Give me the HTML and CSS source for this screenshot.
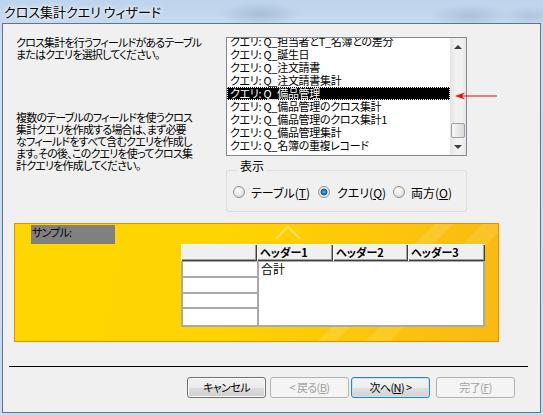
FILE: index.html
```html
<!DOCTYPE html>
<html lang="ja">
<head>
<meta charset="utf-8">
<title>クロス集計クエリ ウィザード</title>
<link rel="stylesheet" href="styles.css">
</head>
<body>
<div class="titlebar"><span class="title">クロス集計クエリ ウィザード</span></div>
<div class="client">
  <div class="top">
    <div class="desc">
      <p class="p1">クロス集計を行うフィールドがあるテーブル<br>またはクエリを選択してください。</p>
      <p class="p2">複数のテーブルのフィールドを使うクロス<br>集計クエリを作成する場合は、まず必要<br>なフィールドをすべて含むクエリを作成し<br>ます。その後、このクエリを使ってクロス集<br>計クエリを作成してください。</p>
    </div>
    <div class="right">
      <div class="listbox">
        <div class="items-view">
          <ul class="items">
            <li>クエリ: Q_担当者とT_名簿との差分</li>
            <li>クエリ: Q_誕生日</li>
            <li>クエリ: Q_注文請書</li>
            <li>クエリ: Q_注文請書集計</li>
            <li class="selected">クエリ: Q_備品管理</li>
            <li>クエリ: Q_備品管理のクロス集計</li>
            <li>クエリ: Q_備品管理のクロス集計1</li>
            <li>クエリ: Q_備品管理集計</li>
            <li>クエリ: Q_名簿の重複レコード</li>
          </ul>
        </div>
        <div class="scrollbar">
          <div class="sb-btn"><span class="tri-up"></span></div>
          <div class="sb-track"><div class="thumb"></div></div>
          <div class="sb-btn"><span class="tri-down"></span></div>
        </div>
        <svg class="redarrow" width="44" height="10" viewBox="0 0 44 10">
          <line x1="6" y1="5" x2="42" y2="5" stroke="#e01010" stroke-width="1.2"/>
          <polygon points="0,5 10,1.5 7,5 10,8.5" fill="#e01010"/>
        </svg>
      </div>
      <fieldset class="group">
        <legend>表示</legend>
        <div class="radios">
          <label class="opt opt1"><span class="radio"></span><span>テーブル(<u>T</u>)</span></label>
          <label class="opt opt2"><span class="radio on"></span><span>クエリ(<u>Q</u>)</span></label>
          <label class="opt"><span class="radio"></span><span>両方(<u>O</u>)</span></label>
        </div>
      </fieldset>
    </div>
  </div>

  <div class="sample">
    <div class="sample-label">サンプル:</div>
    <div class="xtab">
      <div class="xhead">
        <div class="hcell"></div>
        <div class="hcell">ヘッダー1</div>
        <div class="hcell">ヘッダー2</div>
        <div class="hcell">ヘッダー3</div>
      </div>
      <div class="xbody">
        <div class="rowcol">
          <div class="rcell"></div>
          <div class="rcell"></div>
          <div class="rcell"></div>
          <div class="rcell"></div>
        </div>
        <div class="valcell">合計</div>
      </div>
    </div>
  </div>

  <div class="sep"></div>

  <div class="buttons">
    <button class="btn">キャンセル</button>
    <button class="btn disabled">&lt; 戻る(<u>B</u>)</button>
    <button class="btn default">次へ(<u>N</u>) &gt;</button>
    <button class="btn disabled finish">完了(<u>F</u>)</button>
  </div>
</div>
</body>
</html>
```
FILE: styles.css
```css
html, body {
  margin: 0;
  padding: 0;
}
body {
  width: 543px;
  height: 415px;
  overflow: hidden;
  background:
    radial-gradient(ellipse 40px 12px at 260px 14px, rgba(120,140,170,.35), transparent),
    radial-gradient(ellipse 40px 12px at 470px 16px, rgba(120,140,170,.3), transparent),
    radial-gradient(ellipse 30px 10px at 530px 16px, rgba(120,140,170,.25), transparent),
    linear-gradient(#bed4ec, #cbdef2 40px, #c9dcf1);
  font-family: "Noto Sans CJK JP", "Noto Sans", sans-serif;
  font-size: 12px;
  font-feature-settings: "palt";
  color: #000;
}

/* title bar */
.titlebar {
  height: 23px;
  padding-left: 4px;
  display: flex;
  align-items: center;
}
.title {
  font-size: 13px;
  line-height: 15px;
  text-shadow: 0 0 6px #fff, 0 0 3px #fff;
}

/* client area */
.client {
  margin: 0 2px;
  height: 388px;
  border: 1px solid #637286;
  background: #f0f0f0;
}

.top {
  display: flex;
  padding: 13px 0 0 13px;
}
.desc {
  width: 210px;
  font-size: 11px;
  letter-spacing: -0.8px;
}
.desc p {
  margin: 0;
  line-height: 12px;
  white-space: nowrap;
}
.desc .p1 {
  margin-top: -1px;
}
.desc .p2 {
  margin-top: 51px;
}

.right {
  width: 241px;
}

/* list box */
.listbox {
  position: relative;
  width: 241px;
  height: 119px;
  box-sizing: border-box;
  border: 1px solid #828790;
  background: #fff;
  display: flex;
}
.items-view {
  width: 223px;
  overflow: hidden;
}
.items {
  list-style: none;
  margin: -3px 0 0 0;
  padding: 0;
  font-size: 11px;
  letter-spacing: -0.3px;
}
.items li {
  height: 13px;
  line-height: 13px;
  padding-left: 3px;
  white-space: nowrap;
}
.items li.selected {
  background: #000;
  color: #fff;
  outline: 1px dotted #fff;
  outline-offset: -1px;
}

.scrollbar {
  width: 16px;
  display: flex;
  flex-direction: column;
  background: linear-gradient(90deg, #e3e3e3, #f1f1f1 35%, #f1f1f1 70%, #e6e6e6);
}
.sb-btn {
  height: 17px;
  display: flex;
  align-items: center;
  justify-content: center;
}
.tri-up {
  width: 0;
  height: 0;
  border-left: 4px solid transparent;
  border-right: 4px solid transparent;
  border-bottom: 4px solid #3c3c3c;
}
.tri-down {
  width: 0;
  height: 0;
  border-left: 4px solid transparent;
  border-right: 4px solid transparent;
  border-top: 4px solid #3c3c3c;
}
.sb-track {
  flex: 1;
  display: flex;
  flex-direction: column;
  justify-content: flex-end;
}
.thumb {
  height: 15px;
  margin: 0 1px;
  box-sizing: border-box;
  border: 1px solid #9aa1a8;
  border-radius: 2px;
  background: linear-gradient(90deg, #f6f6f6, #e8e8e8 50%, #d9d9d9);
}
.redarrow {
  position: absolute;
  left: 228px;
  top: 53px;
}

/* group box */
.group {
  margin: 3px 0 0 0;
  padding: 0 0 8px 5px;
  width: 241px;
  box-sizing: border-box;
  min-width: 0;
  border: 1px solid #d5dfe5;
  border-radius: 3px;
}
.group legend {
  margin-left: 5px;
  padding: 0 3px 8px;
  line-height: 14px;
  font-size: 12px;
}
.radios {
  display: flex;
  align-items: center;
  height: 22px;
}
.opt {
  flex: none;
  display: flex;
  align-items: center;
  gap: 6px;
  white-space: nowrap;
}
.opt1 { width: 85px; }
.opt2 { width: 75px; gap: 7px; }
.radio {
  width: 12px;
  height: 12px;
  margin-left: 1px;
  box-sizing: border-box;
  border-radius: 50%;
  border: 1px solid #8e8f8f;
  background: radial-gradient(circle at 40% 35%, #ffffff 0, #eeeeee 40%, #d0d0d0 100%);
}
.radio.on {
  background: radial-gradient(circle at 50% 50%, #7cc7f0 0, #2a84c6 1.5px, #0d4f8f 3.2px, #e9e9e9 3.7px, #f9f9f9 100%);
}

/* sample */
.sample {
  position: relative;
  margin: 11px 0 0 11px;
  width: 485px;
  height: 119px;
  box-sizing: border-box;
  border: 1px solid #f08c00;
  background:
    linear-gradient(135deg, transparent 0 70%, rgba(255,255,255,.12) 70% 73%, transparent 73% 78%, rgba(255,255,255,.1) 78% 82%, transparent 82%),
    linear-gradient(100deg, #ffd700 0%, #ffd300 45%, #fdc70a 72%, #f9b912 100%);
  overflow: hidden;
}
.sample::before {
  content: "";
  position: absolute;
  left: 264px;
  top: 5px;
  width: 16px;
  height: 16px;
  border-left: 2px solid rgba(255,255,255,.35);
  border-top: 2px solid rgba(255,255,255,.35);
  transform: rotate(45deg);
}
.sample-label {
  position: relative;
  margin: 1px 0 0 16px;
  width: 84px;
  height: 19px;
  padding-left: 1px;
  box-sizing: border-box;
  background: #808080;
  font-size: 11px;
  letter-spacing: -0.8px;
  line-height: 15px;
}
.xtab {
  position: relative;
  margin-left: 166px;
  width: 304px;
}
.xhead {
  display: grid;
  grid-template-columns: 76px 76px 75px 77px;
  height: 17px;
}
.hcell {
  background: #f0f0f0;
  box-shadow: inset 1px 1px #ffffff, inset -1px -1px #404040, inset -2px -2px #a0a0a0;
  font-size: 11px;
  font-weight: bold;
  line-height: 16px;
  padding-left: 3px;
  white-space: nowrap;
}
.xbody {
  display: grid;
  grid-template-columns: 76px 1fr;
  height: 66px;
  box-sizing: border-box;
  border: 2px solid #a9a9a9;
  border-top-width: 1px;
  background: #fff;
}
.rowcol {
  display: grid;
  grid-template-rows: repeat(4, 1fr);
  border-right: 2px solid #a9a9a9;
  margin-left: -2px;
}
.rcell {
  border-bottom: 2px solid #a9a9a9;
  margin-left: 2px;
}
.rcell:last-child {
  border-bottom: 0;
}
.valcell {
  padding-left: 2px;
  line-height: 14px;
}

/* separator */
.sep {
  margin: 24px 0 0 6px;
  width: 519px;
  height: 1px;
  background: #000;
}

/* buttons */
.buttons {
  display: flex;
  gap: 4px;
  margin: 10px 0 0 184px;
}
.btn {
  width: 79px;
  height: 21px;
  box-sizing: border-box;
  padding: 0;
  border: 1px solid #707070;
  border-radius: 3px;
  background: linear-gradient(#f2f2f2 0, #ebebeb 50%, #dddddd 51%, #cfcfcf 100%);
  box-shadow: inset 0 0 0 1px #fbfbfb;
  font-family: "Noto Sans CJK JP", "Noto Sans", sans-serif;
  font-size: 11px;
  letter-spacing: -0.6px;
  font-feature-settings: "palt";
  line-height: 17px;
  color: #000;
  text-align: center;
}
.btn.disabled {
  border-color: #adb2b5;
  background: #f4f4f4;
  box-shadow: none;
  color: #a2a2a2;
}
.btn.default {
  margin-left: -2px;
  border-color: #3c7fb1;
  box-shadow: inset 0 0 0 1px #bfe6fb;
  background: linear-gradient(#f4f4f4 0, #ededed 50%, #e0e0e0 51%, #d3d3d3 100%);
}
.btn.finish {
  margin-left: 2px;
}
```
